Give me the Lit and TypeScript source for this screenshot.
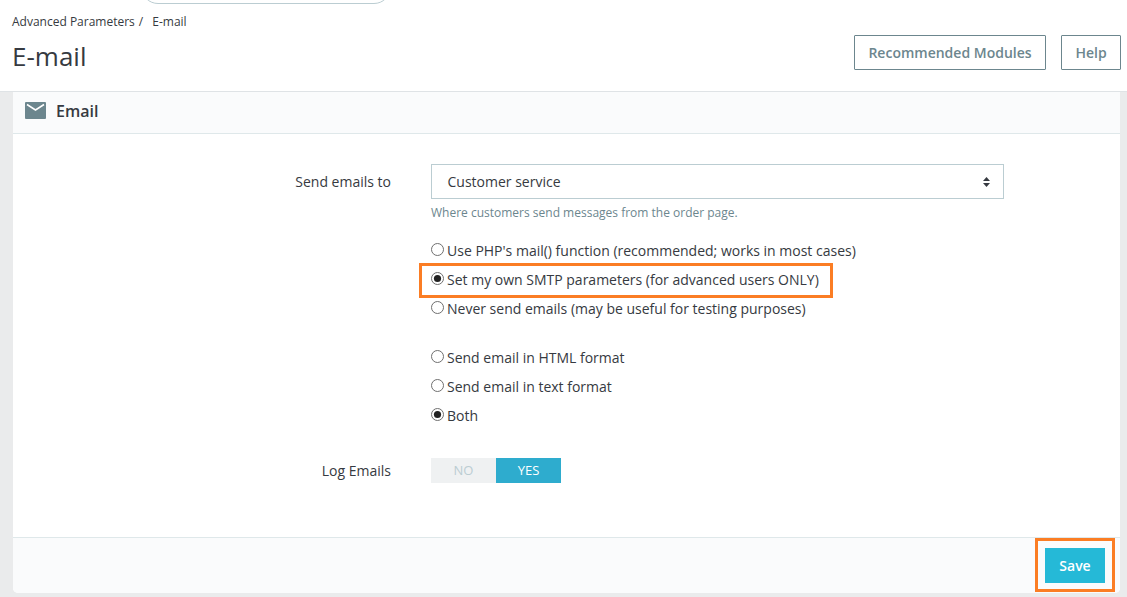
import { LitElement, html, css, svg } from "lit";
import { customElement } from "lit/decorators.js";

@customElement("app-root")
export class AppRoot extends LitElement {
  static styles = css`
    :host { display: block; height: 597px; overflow: hidden; position: relative; background: #eaebec; font-family: "Open Sans", sans-serif; color: #363a41; font-size: 14px; }
    * { box-sizing: border-box; }
    .head { height: 92px; background: #fff; border-bottom: 1px solid #dfe3e6; display: flex; justify-content: space-between; position: relative; padding: 14px 6px 0 12px; }
    .search { position: absolute; left: 141px; top: -30px; width: 250px; height: 34px; border: 1px solid #bbcdd2; border-radius: 17px; background: #fff; }
    .crumb { font-size: 12px; line-height: 15px; display: flex; gap: 9px; }
    .crumb .sep { margin-left: 4px; }
    .crumb-name { display: inline; }
    h1 { font-size: 26px; font-weight: 400; line-height: 36px; margin: 9px 0 0; }
    .actions { display: flex; gap: 15px; padding-top: 21px; align-items: flex-start; }
    .btn { height: 35px; border: 1px solid #6c868e; border-radius: 1px; background: #fff; color: #6c868e; font-weight: 600; font-size: 14px; line-height: 33px; text-align: center; width: 192px; }
    .btn.help { width: 60px; }
    .card { margin: 0 7px 0 13px; height: 501px; background: #fff; display: flex; flex-direction: column; border-radius: 0 0 5px 5px; overflow: hidden; }
    .card-head { height: 42px; background: #fafbfc; border-bottom: 1px solid #dfe8ea; display: flex; align-items: center; gap: 10px; padding: 0 0 4px 12px; font-size: 16px; font-weight: 600; color: #363a41; }
    .card-head svg { width: 21px; height: 17px; display: block; }
    .body { flex: 1; padding-top: 30px; display: grid; grid-template-columns: 378px 573px; column-gap: 40px; align-content: start; }
    .lbl { text-align: right; line-height: 35px; color: #363a41; }
    .select { height: 35px; border: 1px solid #bbcdd2; display: flex; justify-content: space-between; align-items: center; padding: 0 12px 0 15.5px; }
    .select svg { width: 9px; height: 12px; display: block; }
    .hint { grid-column: 2; font-size: 12px; line-height: 15px; color: #6c868e; margin-top: 6px; }
    .group { grid-column: 2; display: flex; flex-direction: column; }
    .group.first { margin-top: 16px; }
    .group.second { margin-top: 20px; }
    .radio { height: 29px; display: flex; align-items: center; gap: 3px; line-height: 29px; }
    .radio svg { width: 13px; height: 13px; flex: none; margin-top: -2px; }
    .log { line-height: 25px; margin-top: 28px; }
    .switch { margin-top: 28px; width: 130px; height: 25px; display: flex; font-size: 13px; text-align: center; line-height: 25px; }
    .no { flex: 1; background: #eff1f2; color: #bbcdd2; }
    .yes { flex: 1; background: #2eacce; color: #fff; }
    .foot { height: 56px; background: #fafbfc; border-top: 1px solid #dfe8ea; display: flex; justify-content: flex-end; padding: 10px 15px 0 0; }
    .save { width: 60px; height: 35px; background: #25b9d7; color: #fff; font-weight: 600; font-size: 14px; line-height: 35px; text-align: center; }
    .mark { position: absolute; border: 3px solid #fb7d24; pointer-events: none; }
    .mark.smtp { left: 419px; top: 263px; width: 414px; height: 35px; }
    .mark.sv { left: 1035px; top: 538px; width: 80px; height: 54px; }
  `;

  private radio(label: string, on = false) {
    return html`<div class="radio">
      <svg viewBox="0 0 13 13">
        <circle cx="6.5" cy="6.5" r="6" fill="#fff" stroke="#6f6f6f" stroke-width="1"></circle>
        ${on ? svg`<circle cx="6.5" cy="6.5" r="3.6" fill="#222"></circle>` : ""}
      </svg>
      <span>${label}</span>
    </div>`;
  }

  render() {
    return html`
      <div class="head">
        <div class="search"></div>
        <div>
          <div class="crumb"><span>Advanced Parameters<span class="sep">/</span></span><span>E-mail</span></div>
          <h1>E-mail</h1>
        </div>
        <div class="actions">
          <div class="btn">Recommended Modules</div>
          <div class="btn help">Help</div>
        </div>
      </div>
      <div class="card">
        <div class="card-head">
          <svg viewBox="0 0 21 17">
            <path fill="#6c868e" d="M1 0h19a1 1 0 0 1 1 1v15a1 1 0 0 1-1 1H1a1 1 0 0 1-1-1V1a1 1 0 0 1 1-1z"></path>
            <path fill="none" stroke="#fff" stroke-width="1.5" d="M2 2.5l8.5 5.5 8.5-5.5"></path>
          </svg>
          <span>Email</span>
        </div>
        <div class="body">
          <div class="lbl">Send emails to</div>
          <div class="select">
            <span>Customer service</span>
            <svg viewBox="0 0 9 12"><path fill="#363a41" d="M4.5 1L8 5H1zM4.5 11L1 7h7z"></path></svg>
          </div>
          <div class="hint">Where customers send messages from the order page.</div>
          <div class="group first">
            ${this.radio("Use PHP's mail() function (recommended; works in most cases)")}
            ${this.radio("Set my own SMTP parameters (for advanced users ONLY)", true)}
            ${this.radio("Never send emails (may be useful for testing purposes)")}
          </div>
          <div class="group second">
            ${this.radio("Send email in HTML format")}
            ${this.radio("Send email in text format")}
            ${this.radio("Both", true)}
          </div>
          <div class="lbl log">Log Emails</div>
          <div class="switch"><div class="no">NO</div><div class="yes">YES</div></div>
        </div>
        <div class="foot"><div class="save">Save</div></div>
      </div>
      <div class="mark smtp"></div>
      <div class="mark sv"></div>
    `;
  }
}
